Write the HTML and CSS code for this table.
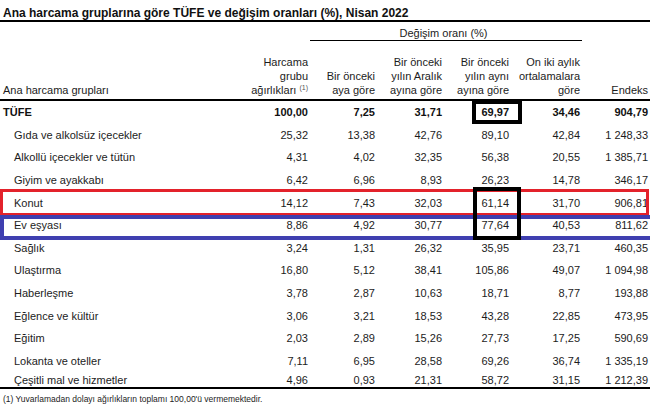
FILE: index.html
```html
<!DOCTYPE html>
<html lang="tr">
<head>
<meta charset="utf-8">
<title>TÜFE Nisan 2022</title>
<link rel="stylesheet" href="styles.css">
</head>
<body>
<div class="title">Ana harcama gruplarına göre TÜFE ve değişim oranları (%), Nisan 2022</div>
<table class="cpi">
  <colgroup>
    <col class="c0"><col class="c1"><col class="c2"><col class="c3"><col class="c4"><col class="c5"><col class="c6">
  </colgroup>
  <thead>
    <tr class="group">
      <th class="lbl name-h" rowspan="2">Ana harcama grupları</th>
      <th class="lbl" rowspan="2">Harcama<br>grubu<br>ağırlıkları <sup>(1)</sup></th>
      <th class="span" colspan="4">Değişim oranı (%)</th>
      <th class="lbl" rowspan="2">Endeks</th>
    </tr>
    <tr class="labels">
      <th class="lbl mid">Bir önceki<br>aya göre</th>
      <th class="lbl mid">Bir önceki<br>yılın Aralık<br>ayına göre</th>
      <th class="lbl mid">Bir önceki<br>yılın aynı<br>ayına göre</th>
      <th class="lbl mid">On iki aylık<br>ortalamalara<br>göre</th>
    </tr>
  </thead>
  <tbody>
    <tr class="total"><td class="name">TÜFE</td><td>100,00</td><td>7,25</td><td>31,71</td><td>69,97</td><td>34,46</td><td>904,79</td></tr>
    <tr><td class="name">Gıda ve alkolsüz içecekler</td><td>25,32</td><td>13,38</td><td>42,76</td><td>89,10</td><td>42,84</td><td>1 248,33</td></tr>
    <tr><td class="name">Alkollü içecekler ve tütün</td><td>4,31</td><td>4,02</td><td>32,35</td><td>56,38</td><td>20,55</td><td>1 385,71</td></tr>
    <tr><td class="name">Giyim ve ayakkabı</td><td>6,42</td><td>6,96</td><td>8,93</td><td>26,23</td><td>14,78</td><td>346,17</td></tr>
    <tr><td class="name">Konut</td><td>14,12</td><td>7,43</td><td>32,03</td><td>61,14</td><td>31,70</td><td>906,81</td></tr>
    <tr><td class="name">Ev eşyası</td><td>8,86</td><td>4,92</td><td>30,77</td><td>77,64</td><td>40,53</td><td>811,62</td></tr>
    <tr><td class="name">Sağlık</td><td>3,24</td><td>1,31</td><td>26,32</td><td>35,95</td><td>23,71</td><td>460,35</td></tr>
    <tr><td class="name">Ulaştırma</td><td>16,80</td><td>5,12</td><td>38,41</td><td>105,86</td><td>49,07</td><td>1 094,98</td></tr>
    <tr><td class="name">Haberleşme</td><td>3,78</td><td>2,87</td><td>10,63</td><td>18,71</td><td>8,77</td><td>193,88</td></tr>
    <tr><td class="name">Eğlence ve kültür</td><td>3,06</td><td>3,21</td><td>18,53</td><td>43,28</td><td>22,85</td><td>473,95</td></tr>
    <tr><td class="name">Eğitim</td><td>2,03</td><td>2,89</td><td>15,26</td><td>27,73</td><td>17,25</td><td>590,69</td></tr>
    <tr><td class="name">Lokanta ve oteller</td><td>7,11</td><td>6,95</td><td>28,58</td><td>69,26</td><td>36,74</td><td>1 335,19</td></tr>
    <tr class="last"><td class="name">Çeşitli mal ve hizmetler</td><td>4,96</td><td>0,93</td><td>21,31</td><td>58,72</td><td>31,15</td><td>1 212,39</td></tr>
  </tbody>
</table>
<div class="note">(1) Yuvarlamadan dolayı ağırlıkların toplamı 100,00'ü vermemektedir.</div>

<div class="mark mark-red"></div>
<div class="mark mark-blue"></div>
<div class="mark mark-black mark-total"></div>
<div class="mark mark-black mark-pair"></div>
</body>
</html>
```

FILE: styles.css
```css
html, body {
  margin: 0;
  padding: 0;
  background: #fff;
}

body {
  position: relative;
  width: 650px;
  height: 405px;
  overflow: hidden;
  font-family: "Liberation Sans", Arial, sans-serif;
  color: #1c1c1c;
}

.title {
  font-size: 12px;
  font-weight: bold;
  line-height: 14px;
  height: 14px;
  padding: 6px 0 0 3px;
  border-bottom: 2px solid #000;
  color: #111;
  white-space: nowrap;
}

.cpi {
  width: 650px;
  table-layout: fixed;
  border-collapse: separate;
  border-spacing: 0;
  font-size: 11px;
}

.c0 { width: 238px; }
.c1 { width: 72px; }
.c2 { width: 67px; }
.c3 { width: 67px; }
.c4 { width: 67px; }
.c5 { width: 71px; }
.c6 { width: 68px; }

.cpi th {
  font-weight: normal;
  line-height: 14px;
  white-space: nowrap;
}

.cpi .span {
  text-align: center;
  padding: 4px 5px 0 0;
  border-bottom: 1px solid #000;
}

.cpi .lbl {
  text-align: right;
  vertical-align: bottom;
  padding: 0 2px 2px 0;
  border-bottom: 2px solid #000;
}

.cpi .lbl.mid {
  padding-top: 14px;
}

.cpi .name-h {
  text-align: left;
  padding-left: 3px;
}

.cpi sup {
  font-size: 7px;
  line-height: 0;
  vertical-align: 4px;
  color: #555;
}

.cpi tbody tr {
  height: 22.65px;
}

.cpi td {
  text-align: right;
  vertical-align: top;
  line-height: 13px;
  padding: 5px 2px 0 0;
  white-space: nowrap;
}

.cpi td.name {
  text-align: left;
  padding-left: 14px;
}

.cpi .total td {
  font-weight: bold;
  color: #111;
}

.cpi .total td.name {
  padding-left: 3px;
}

.cpi tbody tr.last {
  height: 14px;
}

.cpi .last td {
  padding-top: 1.5px;
  border-bottom: 2px solid #000;
}

.note {
  font-size: 8.5px;
  line-height: 12px;
  padding: 4px 0 0 3px;
  white-space: nowrap;
}

.mark {
  position: absolute;
  box-sizing: border-box;
}

.mark-red {
  left: 0;
  top: 189px;
  width: 649px;
  height: 27px;
  border: 3px solid #e3222b;
}

.mark-blue {
  left: 0;
  top: 215px;
  width: 650px;
  height: 25px;
  border: 4px solid #3f3fb0;
  border-right: none;
}

.mark-black {
  border: 4px solid #000;
}

.mark-total {
  left: 472px;
  top: 100px;
  width: 50px;
  height: 24px;
}

.mark-pair {
  left: 473px;
  top: 187px;
  width: 48px;
  height: 53px;
}
```
